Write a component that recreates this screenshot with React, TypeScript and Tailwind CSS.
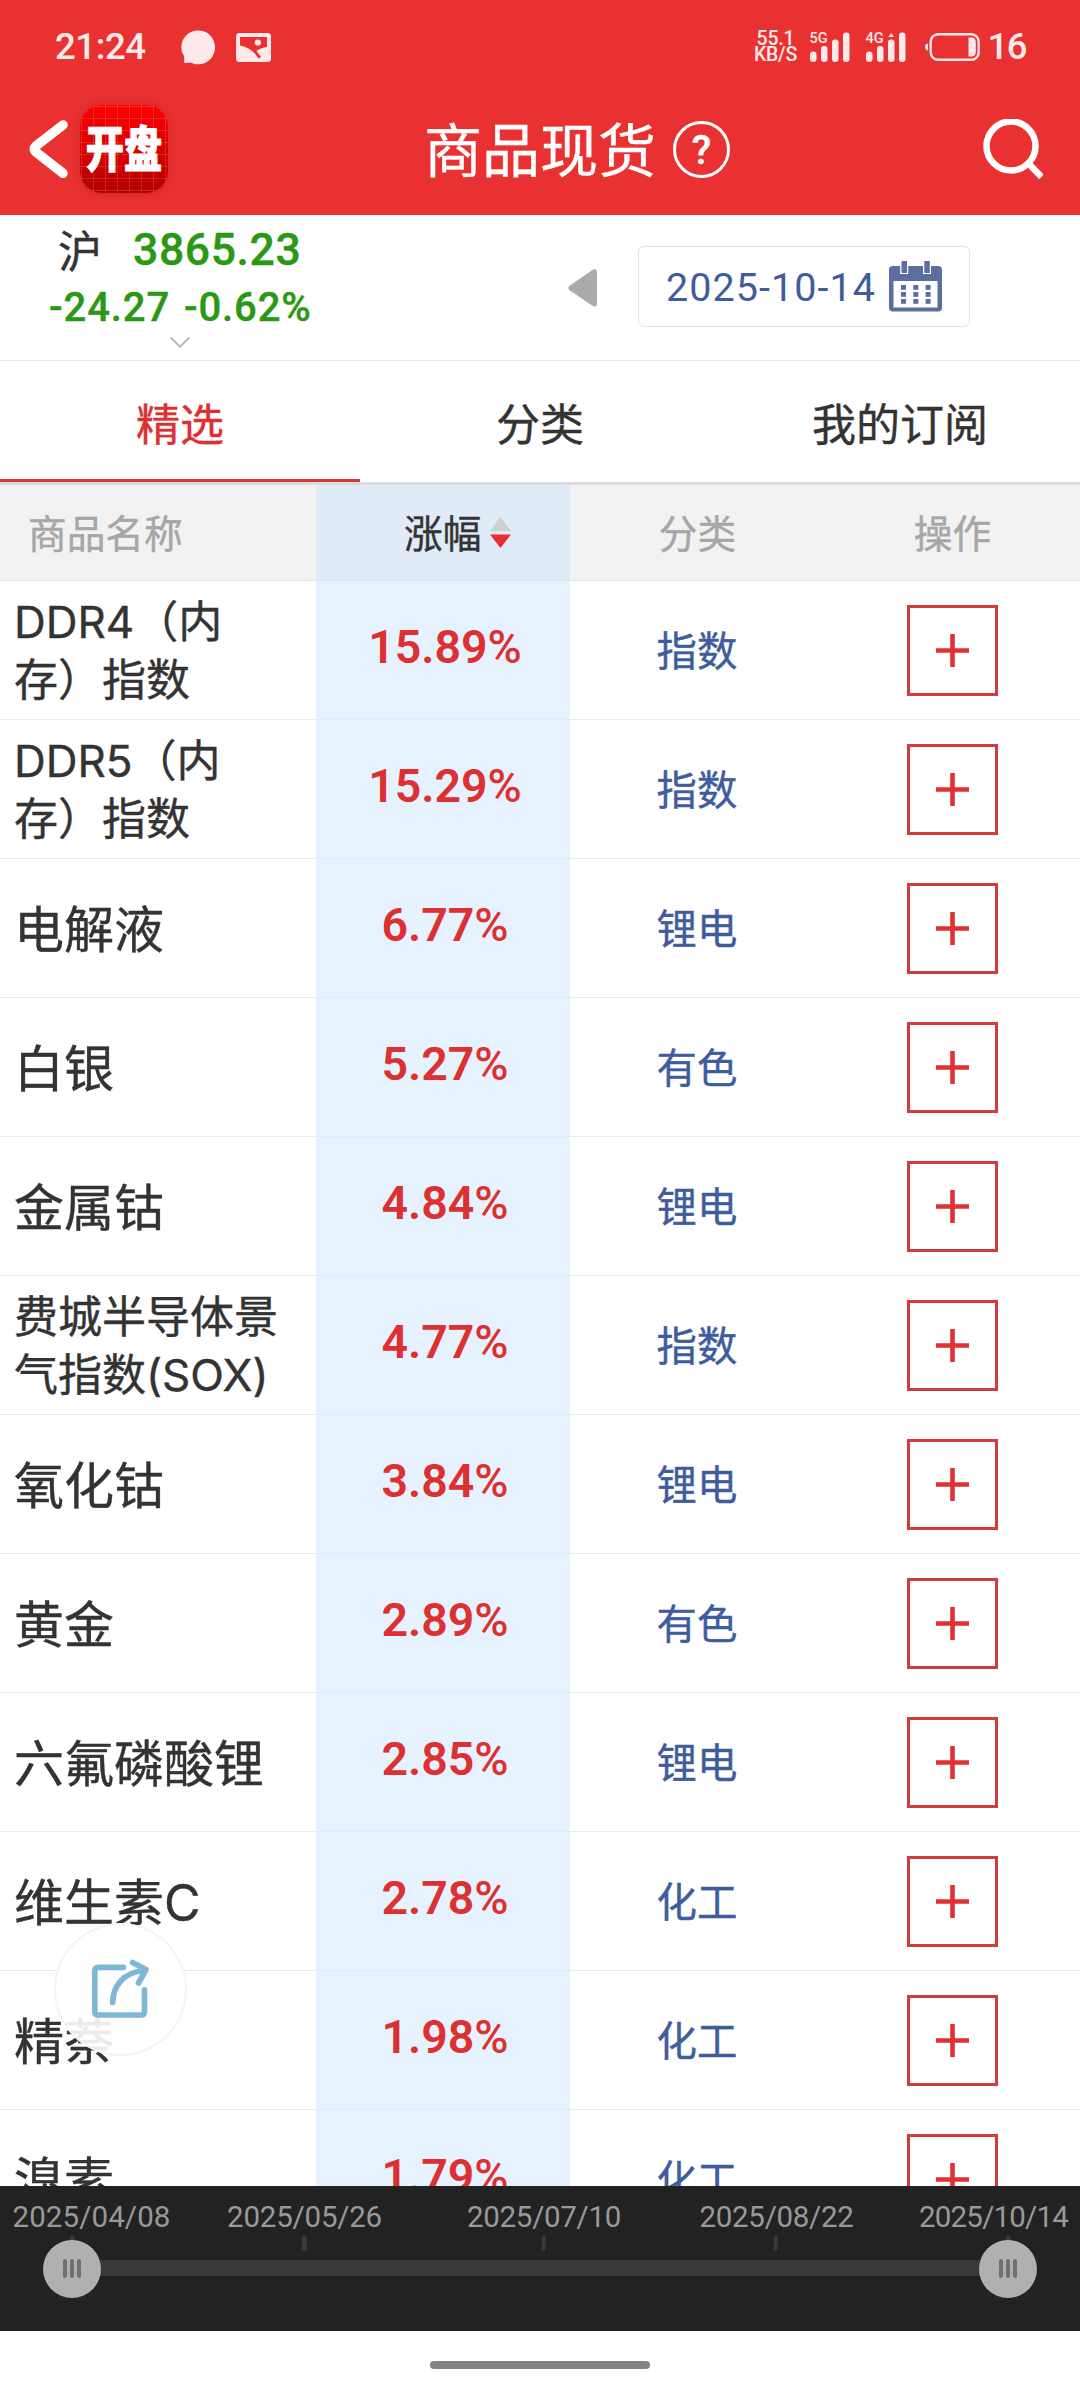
import React from "react";

type Commodity = {
  name: string[];
  change: string;
  category: string;
};

const commodities: Commodity[] = [
  { name: ["DDR4（内", "存）指数"], change: "15.89%", category: "指数" },
  { name: ["DDR5（内", "存）指数"], change: "15.29%", category: "指数" },
  { name: ["电解液"], change: "6.77%", category: "锂电" },
  { name: ["白银"], change: "5.27%", category: "有色" },
  { name: ["金属钴"], change: "4.84%", category: "锂电" },
  { name: ["费城半导体景", "气指数(SOX)"], change: "4.77%", category: "指数" },
  { name: ["氧化钴"], change: "3.84%", category: "锂电" },
  { name: ["黄金"], change: "2.89%", category: "有色" },
  { name: ["六氟磷酸锂"], change: "2.85%", category: "锂电" },
  { name: ["维生素C"], change: "2.78%", category: "化工" },
  { name: ["精萘"], change: "1.98%", category: "化工" },
  { name: ["溴素"], change: "1.79%", category: "化工" },
];

const timeline = [
  { label: "2025/04/08", labelX: 91.5, tickX: 72, spacing: 0.1 },
  { label: "2025/05/26", labelX: 304.5, tickX: 304, spacing: -0.2 },
  { label: "2025/07/10", labelX: 544, tickX: 543.5, spacing: -0.3 },
  { label: "2025/08/22", labelX: 776.5, tickX: 775.5, spacing: -0.3 },
  { label: "2025/10/14", labelX: 993.5, tickX: 1008, spacing: -0.8 },
];

function Signal({ label, split }: { label: string; split?: boolean }) {
  return (
    <div className="relative h-[30px] w-[40px]">
      <span className="absolute left-0 top-0 text-[14.5px] font-medium leading-[13px]">{label}</span>
      <svg className="block" width="40" height="30" viewBox="0 0 40 30" fill="currentColor">
        <rect x="0" y="19.5" width="6.5" height="10.5" rx="3.2" />
        <rect x="11" y="14" width="6.5" height="16" rx="3" />
        <rect x="22" y="7.5" width="6.5" height="22.5" rx="3" />
        {split && <path d="M22.4 5 L25.2 1 L28 5Z" />}
        <rect x="33" y="0.5" width="6.5" height="29.5" rx="3" />
      </svg>
    </div>
  );
}

function StatusBar() {
  return (
    <div className="flex h-[94px] items-center pl-[55px] pr-[54px] font-['Roboto',sans-serif] text-[#fde9ea] [-webkit-text-stroke:0px]">
      <span className="w-[126px] text-[36.5px] font-medium leading-none tracking-[-0.4px]">21:24</span>
      <svg width="35" height="35" viewBox="0 0 35 35" fill="currentColor">
        <path d="M17.3 0.5C27 0.5 34 8 34 17.3S27 34.3 17.3 34.3C14.5 34.3 12 33.6 9.6 32.4L3.2 33V26.2C1.2 23.5 0.3 20.5 0.3 17.3C0.3 8 7.6 0.5 17.3 0.5Z" />
      </svg>
      <svg className="ml-5" width="35" height="29" viewBox="0 0 35 29">
        <rect width="35" height="29" rx="3.5" fill="currentColor" />
        <path d="M4 4H31V14C27 14.5 23 16 20.5 18L25 24L22.5 25.5C18 18 12 14 4 12.5Z" fill="#e93131" />
        <circle cx="21.8" cy="9.5" r="3.1" fill="currentColor" />
      </svg>
      <div className="ml-auto flex items-center">
        <div className="w-[44px] text-center text-[19.5px] font-medium leading-4 tracking-[-0.2px]">
          <div>55.1</div>
          <div>KB/S</div>
        </div>
        <div className="ml-3">
          <Signal label="5G" />
        </div>
        <div className="ml-4">
          <Signal label="4G" split />
        </div>
        <svg className="ml-[18px]" width="58" height="30" viewBox="0 0 58 30" fill="none">
          <path d="M4 11.5C1.6 12 1 13.3 1 15S1.6 18 4 18.5Z" fill="currentColor" />
          <rect x="6.7" y="2.2" width="48" height="25.6" rx="7.5" stroke="currentColor" strokeWidth="2.4" />
          <path d="M44.5 5.5H47.5Q51.8 5.5 51.8 10.5V19.5Q51.8 24.5 47.5 24.5H44.5Z" fill="currentColor" />
        </svg>
        <span className="ml-1.5 text-[36.5px] font-medium leading-none tracking-[-1.5px]">16</span>
      </div>
    </div>
  );
}

function AppLogo() {
  return (
    <div className="ml-3 flex h-[88px] w-[88px] items-center justify-center overflow-hidden rounded-[22px] bg-[linear-gradient(to_right,transparent_11px,rgba(255,255,255,0.14)_11px),linear-gradient(to_bottom,transparent_11px,rgba(255,255,255,0.14)_11px),linear-gradient(to_bottom,#ff0000,#b40000)] bg-[position:2px_0,0_2px,0_0] bg-[size:12px_100%,100%_12px,100%_100%] shadow-[0_0_8px_rgba(120,0,0,0.25)]">
      <span className="scale-x-[0.78] whitespace-nowrap pb-[8px] font-['Noto_Sans_CJK_SC',sans-serif] text-[49px] font-black leading-none [-webkit-text-stroke:1px_currentColor]">
        开盘
      </span>
    </div>
  );
}

function NavBar() {
  return (
    <div className="flex h-[121px] items-center pb-[11px] pl-[29px] pr-[37px] text-white">
      <svg width="39" height="58" viewBox="0 0 39 58" fill="none" stroke="currentColor" strokeWidth="9.5" strokeLinecap="round" strokeLinejoin="round">
        <path d="M34 5L7.5 25.5Q3 29 7.5 32.5L34 53.3" />
      </svg>
      <AppLogo />
      <h1 className="ml-[256px] w-[249px] whitespace-nowrap pt-[3px] text-[58px] font-normal leading-none">商品现货</h1>
      <div className="flex h-[57px] w-[57px] items-center justify-center rounded-full border-[3px] border-white pt-[3px] font-['Roboto',sans-serif] text-[40px] font-medium leading-none">
        ?
      </div>
      <svg className="ml-auto" width="60" height="60" viewBox="0 0 60 60" fill="none" stroke="currentColor">
        <circle cx="28" cy="27" r="24.5" strokeWidth="6.5" />
        <path d="M45.5 44.5L58.5 58" strokeWidth="6.5" />
      </svg>
    </div>
  );
}

function CalendarIcon() {
  return (
    <svg width="53" height="51" viewBox="0 0 53 51">
      <rect y="5" width="53" height="45.5" rx="4" fill="#5c6d9f" />
      <rect x="4.5" y="20" width="44" height="26.5" fill="#fff" />
      <rect x="11.2" y="0" width="8" height="13" fill="#fff" />
      <rect x="34" y="0" width="8" height="13" fill="#fff" />
      <rect x="12.5" y="0" width="5.5" height="12" fill="#5c6d9f" />
      <rect x="35.3" y="0" width="5.5" height="12" fill="#5c6d9f" />
      {[12, 24.3, 36.6].map((x) =>
        [24, 31, 38].map((y) => <rect key={`${x}-${y}`} x={x} y={y} width="5" height="4.8" fill="#5c6d9f" />),
      )}
    </svg>
  );
}

function MarketBar() {
  return (
    <section className="flex h-[146px] items-start border-b border-[#e8e8e8]">
      <div className="w-[360px] pl-[49px] font-['Roboto','Noto_Sans_CJK_SC',sans-serif] font-medium text-[#2a9814]">
        <div className="flex h-[63px] items-center">
          <span className="w-[84px] pl-[9px] pt-[11px] font-['Inter','Noto_Sans_CJK_SC',sans-serif] text-[44px] font-normal leading-none text-[#333]">
            沪
          </span>
          <span className="pt-[7px] text-[44.5px] leading-none tracking-[0.6px]">3865.23</span>
        </div>
        <div className="h-[56px] whitespace-nowrap pt-[10px] text-[40px] leading-[40px] tracking-[0.9px]">
          -24.27<span className="ml-[3px]"> -0.62%</span>
        </div>
        <svg className="ml-[121px] mt-[3px]" width="20" height="11" viewBox="0 0 20 11" fill="none" stroke="#b8b8b8" strokeWidth="2">
          <path d="M0.7 0.5L10 9.6L19.3 0.5" />
        </svg>
      </div>
      <svg className="ml-[208px] mt-[54px]" width="29" height="38" viewBox="0 0 29 38" fill="#ababab">
        <path d="M24 1.2Q29 -1.5 29 4V34Q29 39.5 24 36.5L2 21.5Q-1 19 2 16.5Z" />
      </svg>
      <button className="ml-[41px] mt-[31px] flex h-[81px] w-[332px] items-center rounded-[6px] border border-[#e2e2e4] pl-[27px] text-[#3f5c9e]">
        <span className="w-[223px] whitespace-nowrap pt-[2px] text-left font-['Roboto',sans-serif] text-[39.5px] leading-none tracking-[1.05px] [-webkit-text-stroke:0px]">
          2025-10-14
        </span>
        <CalendarIcon />
      </button>
    </section>
  );
}

function Tabs() {
  const tabs = ["精选", "分类", "我的订阅"];
  return (
    <nav className="grid h-[124px] grid-cols-3 border-b-[3px] border-[#dcdcdc] text-[44px] leading-none text-[#333]">
      {tabs.map((tab, i) => (
        <div
          key={tab}
          className={
            i === 0
              ? "flex items-center justify-center border-b-[3px] border-[#d3393b] pt-[9px] text-[#dc3031]"
              : "flex items-center justify-center border-b-[3px] border-transparent pt-[9px]"
          }
        >
          {tab}
        </div>
      ))}
    </nav>
  );
}

function TableHead() {
  return (
    <div className="grid h-[96px] grid-cols-[316px_254px_255px_255px] border-b border-[#e6e6e6] bg-[#f2f2f2] text-[38.7px] leading-none text-[#a6a6a6]">
      <div className="flex items-center pl-7 pt-[3px]">商品名称</div>
      <div className="flex items-center bg-[#e0ebf7] pl-[88px] text-[#333]">
        <span className="pt-[3px]">涨幅</span>
        <svg className="ml-[9px]" width="21" height="31" viewBox="0 0 21 31">
          <path d="M10.5 0L21 14H0Z" fill="#d0d0d0" />
          <path d="M10.5 31L0 17.5H21Z" fill="#e5302f" />
        </svg>
      </div>
      <div className="flex items-center justify-center pt-[3px]">分类</div>
      <div className="flex items-center justify-center pt-[3px]">操作</div>
    </div>
  );
}

function Row({ item }: { item: Commodity }) {
  return (
    <div className="grid h-[139px] shrink-0 grid-cols-[316px_254px_255px_255px] border-b border-[#e9eaec] bg-white">
      <div
        className={
          item.name.length > 1
            ? "flex flex-col justify-center whitespace-nowrap pl-[14px] pt-[1px] text-[44px] leading-[58px] text-[#333]"
            : "flex flex-col justify-center whitespace-nowrap pl-[14px] pt-[3px] text-[50px] leading-[58px] text-[#333]"
        }
      >
        {item.name.map((line) => (
          <div key={line}>{line}</div>
        ))}
      </div>
      <div className="flex items-center justify-center bg-[#e6f2ff] pb-[6px] pl-[4px] font-['Roboto',sans-serif] text-[46.5px] font-semibold leading-none text-[#dc3031] [-webkit-text-stroke:0px]">
        {item.change.slice(0, -1)}
        <span className="font-medium">%</span>
      </div>
      <div className="flex items-center justify-center pr-px pt-[4px] text-[40.4px] leading-none text-[#3f5c9e]">{item.category}</div>
      <div className="flex items-center justify-center pt-[1px]">
        <button className="flex h-[91px] w-[91px] items-center justify-center border-[3px] border-[#d33c3c]">
          <svg width="33" height="33" viewBox="0 0 33 33" stroke="#e13132" strokeWidth="4.6">
            <path d="M16.5 0V33M0 16.5H33" />
          </svg>
        </button>
      </div>
    </div>
  );
}

function ShareButton() {
  return (
    <button className="absolute left-[54px] top-[1923px] flex h-[133px] w-[133px] items-center justify-center rounded-full border-2 border-[#f3f3f3]/90 bg-white/90">
      <svg className="relative -left-px -top-px" width="60" height="60" viewBox="0 0 60 60" fill="none" stroke="#80b7d6" strokeWidth="5.7" strokeLinecap="round" strokeLinejoin="round">
        <path d="M33.5 8.3H8.5Q4.8 8.3 4.8 12V52.5Q4.8 56 8.5 56H51Q54.5 56 54.5 52.5V30.8" />
        <path d="M22.7 43.5C23 26 34 13.5 54 11.5" />
        <path d="M42.5 3.5L56 10.5L48.5 24" />
      </svg>
    </button>
  );
}

function Thumb({ x }: { x: number }) {
  return (
    <div
      className="absolute top-[53.5px] flex h-[58px] w-[58px] -translate-x-1/2 items-center justify-center gap-[3px] rounded-full bg-[#b0b0b0]"
      style={{ left: x }}
    >
      <i className="h-[19px] w-1 rounded-full bg-[#707070]" />
      <i className="h-[19px] w-1 rounded-full bg-[#707070]" />
      <i className="h-[19px] w-1 rounded-full bg-[#707070]" />
    </div>
  );
}

function RangeSlider() {
  return (
    <footer className="relative h-[145px] shrink-0 bg-[#222]">
      {timeline.map((t) => (
        <React.Fragment key={t.label}>
          <span
            className="absolute top-[16px] -translate-x-1/2 whitespace-nowrap font-['Roboto',sans-serif] text-[29.5px] leading-[31px] text-[#999] [-webkit-text-stroke:0px]"
            style={{ left: t.labelX, letterSpacing: t.spacing }}
          >
            {t.label}
          </span>
          <i className="absolute top-[50px] h-[15px] w-[4.5px] -translate-x-1/2 rounded-full bg-[#3a3a3a]" style={{ left: t.tickX }} />
        </React.Fragment>
      ))}
      <div className="absolute left-[72px] top-[74px] h-4 w-[936px] bg-[#3a3a3a]" />
      <Thumb x={72} />
      <Thumb x={1008} />
    </footer>
  );
}

export default function App() {
  return (
    <div className="relative flex h-[2400px] w-[1080px] flex-col overflow-hidden bg-white font-['Inter','Noto_Sans_CJK_SC',sans-serif] [-webkit-text-stroke:0.4px_currentColor]">
      <header className="shrink-0 bg-[#e93131]">
        <StatusBar />
        <NavBar />
      </header>
      <div className="shrink-0">
        <MarketBar />
        <Tabs />
        <TableHead />
      </div>
      <main className="flex min-h-0 flex-1 flex-col overflow-hidden">
        {commodities.map((item) => (
          <Row key={item.name.join("")} item={item} />
        ))}
      </main>
      <RangeSlider />
      <div className="flex h-[69px] shrink-0 justify-center bg-white pt-[30px]">
        <div className="h-2 w-[220px] rounded-full bg-[#828282]" />
      </div>
      <ShareButton />
    </div>
  );
}
